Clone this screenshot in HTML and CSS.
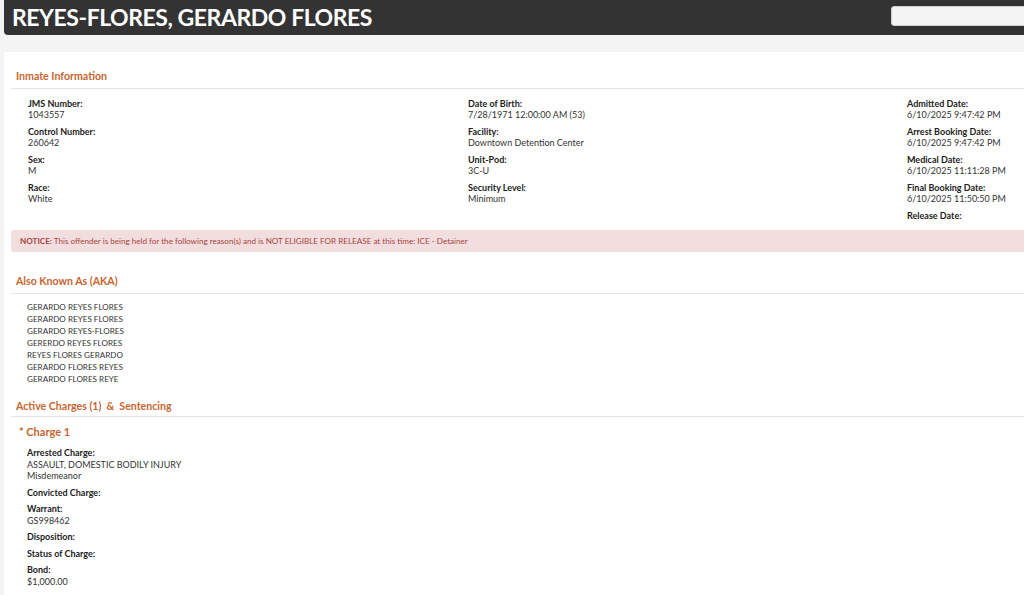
FILE: index.html
```html
<!DOCTYPE html>
<html lang="en">
<head>
  <meta charset="UTF-8">
  <title>Inmate Details</title>
  <link rel="stylesheet" href="styles.css">
</head>
<body>
  <div class="page">
    <!-- Title bar -->
    <header class="topbar">
      <h1>REYES-FLORES, GERARDO FLORES</h1>
      <input class="search" type="text">
    </header>

    <main class="panel">
      <!-- Inmate info -->
      <h2 class="section-title">Inmate Information</h2>
      <div class="info-grid">
        <div class="col">
          <div class="field"><div class="label">JMS Number:</div><div class="value">1043557</div></div>
          <div class="field"><div class="label">Control Number:</div><div class="value">260642</div></div>
          <div class="field"><div class="label">Sex:</div><div class="value">M</div></div>
          <div class="field"><div class="label">Race:</div><div class="value">White</div></div>
        </div>
        <div class="col">
          <div class="field"><div class="label">Date of Birth:</div><div class="value">7/28/1971 12:00:00 AM (53)</div></div>
          <div class="field"><div class="label">Facility:</div><div class="value">Downtown Detention Center</div></div>
          <div class="field"><div class="label">Unit-Pod:</div><div class="value">3C-U</div></div>
          <div class="field"><div class="label">Security Level:</div><div class="value">Minimum</div></div>
        </div>
        <div class="col">
          <div class="field"><div class="label">Admitted Date:</div><div class="value">6/10/2025 9:47:42 PM</div></div>
          <div class="field"><div class="label">Arrest Booking Date:</div><div class="value">6/10/2025 9:47:42 PM</div></div>
          <div class="field"><div class="label">Medical Date:</div><div class="value">6/10/2025 11:11:28 PM</div></div>
          <div class="field"><div class="label">Final Booking Date:</div><div class="value">6/10/2025 11:50:50 PM</div></div>
          <div class="field"><div class="label">Release Date:</div></div>
        </div>
      </div>

      <div class="notice">
        <b>NOTICE:</b> This offender is being held for the following reason(s) and is NOT ELIGIBLE FOR RELEASE at this time: ICE - Detainer
      </div>

      <!-- AKA -->
      <h2 class="section-title aka-title">Also Known As (AKA)</h2>
      <ul class="aka-list">
        <li>GERARDO REYES FLORES</li>
        <li>GERARDO REYES FLORES</li>
        <li>GERARDO REYES-FLORES</li>
        <li>GERERDO REYES FLORES</li>
        <li>REYES FLORES GERARDO</li>
        <li>GERARDO FLORES REYES</li>
        <li>GERARDO FLORES REYE</li>
      </ul>

      <!-- Charges -->
      <h2 class="section-title charges-title">Active Charges (1) &nbsp;&amp;&nbsp; Sentencing</h2>
      <h3 class="charge-title">* Charge 1</h3>
      <div class="charge">
        <div class="field"><div class="label">Arrested Charge:</div><div class="value">ASSAULT, DOMESTIC BODILY INJURY</div><div class="value">Misdemeanor</div></div>
        <div class="field"><div class="label">Convicted Charge:</div></div>
        <div class="field"><div class="label">Warrant:</div><div class="value">GS998462</div></div>
        <div class="field"><div class="label">Disposition:</div></div>
        <div class="field"><div class="label">Status of Charge:</div></div>
        <div class="field"><div class="label">Bond:</div><div class="value">$1,000.00</div></div>
      </div>
    </main>
  </div>
</body>
</html>
```

FILE: styles.css
```css
html, body {
  margin: 0;
  padding: 0;
  overflow: hidden;
  background: #f4f4f4;
  font-family: Lato, 'Open Sans', sans-serif;
  color: #333;
}

.page {
  width: 1100px;
}

.topbar {
  margin-left: 4px;
  height: 35px;
  background: #333333;
  border-bottom-left-radius: 4px;
  padding: 0 29px 0 8px;
  display: flex;
  align-items: center;
  justify-content: space-between;
}

.topbar h1 {
  margin: 0;
  font-size: 23px;
  font-weight: bold;
  color: #fff;
  line-height: 35px;
  letter-spacing: -0.45px;
}

.search {
  width: 180px;
  height: 20px;
  box-sizing: border-box;
  margin-top: -3px;
  border: 1px solid #ccc;
  border-radius: 3px;
  background: #f4f4f4;
}

.panel {
  margin: 17px 0 0 4px;
  background: #fff;
  padding: 0 0 20px 7px;
  min-height: 560px;
}

.section-title {
  margin: 0;
  padding: 16px 5px 4px;
  font-size: 10.6px;
  line-height: 16px;
  font-weight: bold;
  color: #c8652f;
  border-bottom: 1px solid #e3e3e3;
}

.aka-title {
  padding-top: 21px;
}

.charges-title {
  padding-top: 13px;
  padding-bottom: 2px;
}

.info-grid {
  display: grid;
  grid-template-columns: 440px 439px auto;
  padding: 9px 0 0 17px;
}

.field {
  margin-bottom: 6px;
  font-size: 9px;
  line-height: 11px;
}

.label {
  font-weight: bold;
  color: #222;
}

.value {
  color: #333;
}

.notice {
  margin-top: 3px;
  background: #f2dede;
  color: #a94442;
  border-radius: 3px;
  font-size: 8.1px;
  line-height: 22px;
  padding: 0 9px;
}

.aka-list {
  list-style: none;
  margin: 7px 0 0;
  padding: 0 0 0 16px;
  font-size: 8.1px;
  line-height: 12px;
  color: #333;
}

.charge-title {
  margin: 0;
  padding: 7px 0 0 8px;
  font-size: 11px;
  line-height: 15px;
  font-weight: bold;
  color: #c8652f;
}

.charge {
  padding: 8px 0 0 16px;
}

.charge .field {
  margin-bottom: 5px;
  line-height: 11.5px;
}
```
